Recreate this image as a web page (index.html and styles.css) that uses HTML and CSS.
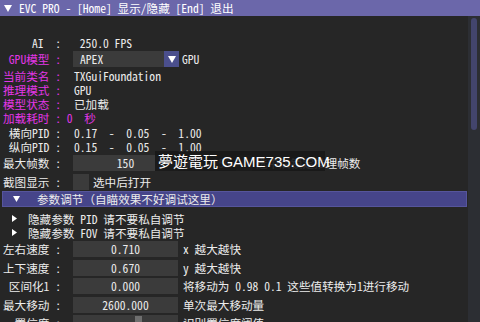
FILE: index.html
```html
<!DOCTYPE html>
<html lang="zh">
<head>
  <meta charset="UTF-8">
  <title>EVC PRO</title>
  <link rel="stylesheet" href="styles.css">
</head>
<body>
  <div class="window">
    <div class="titlebar">
      <svg class="tri-down" width="8" height="7" viewBox="0 0 8 7"><polygon points="0,0 8,0 4,7" fill="#fff"/></svg>
      <span>EVC PRO - [Home] 显示/隐藏 [End] 退出</span>
    </div>

    <div class="body">
      <div class="content">
        <div class="row"><span class="lbl">     AI  :</span><span class="val"> 250.0 FPS</span></div>

        <div class="wrow">
          <span class="lbl pink"> GPU模型 :</span>
          <div class="combo">
            <span class="combo-text">APEX</span>
            <span class="combo-btn"><svg width="8" height="7" viewBox="0 0 8 7"><polygon points="0,0 8,0 4,7" fill="#fff"/></svg></span>
          </div>
          <span class="after-combo">GPU</span>
        </div>

        <div class="row"><span class="lbl pink">当前类名 :</span><span class="val">TXGuiFoundation</span></div>
        <div class="row"><span class="lbl pink">推理模式 :</span><span class="val">GPU</span></div>
        <div class="row"><span class="lbl pink">模型状态 :</span><span class="val">已加载</span></div>
        <div class="row"><span class="pink">加载耗时 : 0  秒</span></div>
        <div class="row"><span class="lbl"> 横向PID :</span><span class="val">0.17  -  0.05  -  1.00</span></div>
        <div class="row"><span class="lbl"> 纵向PID :</span><span class="val">0.15  -  0.05  -  1.00</span></div>

        <div class="wrow">
          <span class="lbl">最大帧数 :</span>
          <div class="box">150</div>
          <span class="after">帧</span>
          <span class="dim">150</span>
          <span class="check check-lock"></span>
          <span class="check-label">选中后锁定推理帧数</span>
        </div>

        <div class="wrow">
          <span class="lbl">截图显示 :</span>
          <span class="check"></span>
          <span class="check-label">选中后打开</span>
        </div>

        <div class="header">
          <svg class="tri-small" width="7" height="6" viewBox="0 0 7 6"><polygon points="0,0 7,0 3.5,6" fill="#fff"/></svg>
          <span>参数调节（自瞄效果不好调试这里）</span>
        </div>

        <div class="row tree"><svg class="tri-right" width="5" height="7" viewBox="0 0 5 7"><polygon points="0,0 5,3.5 0,7" fill="#fff"/></svg><span>隐藏参数 PID 请不要私自调节</span></div>
        <div class="row tree"><svg class="tri-right" width="5" height="7" viewBox="0 0 5 7"><polygon points="0,0 5,3.5 0,7" fill="#fff"/></svg><span>隐藏参数 FOV 请不要私自调节</span></div>

        <div class="wrow">
          <span class="lbl">左右速度 :</span>
          <div class="box">0.710</div>
          <span class="after">x 越大越快</span>
        </div>
        <div class="wrow">
          <span class="lbl">上下速度 :</span>
          <div class="box">0.670</div>
          <span class="after">y 越大越快</span>
        </div>
        <div class="wrow">
          <span class="lbl"> 区间化1 :</span>
          <div class="box">0.000</div>
          <span class="after">将移动为 0.98 0.1 这些值转换为1进行移动</span>
        </div>
        <div class="wrow">
          <span class="lbl">最大移动 :</span>
          <div class="box">2600.000</div>
          <span class="after">单次最大移动量</span>
        </div>
        <div class="wrow">
          <span class="lbl">  置信度 :</span>
          <div class="box slider"><span class="grab"></span></div>
          <span class="after">识别置信度阈值</span>
        </div>
      </div>

      <div class="scrollbar"><div class="thumb"></div></div>
    </div>

    <div class="watermark">夢遊電玩 <span class="wm-latin">GAME735.COM</span></div>
  </div>
</body>
</html>
```

FILE: styles.css
```css
* { box-sizing: border-box; }
body { margin: 0; background: #262626; }

.window {
  position: relative;
  width: 480px;
  height: 322px;
  overflow: hidden;
  background: #262626;
  color: #ececec;
  font-family: "Noto Sans Mono CJK SC", "Noto Sans CJK SC", monospace;
  font-size: 11.6px;
}

.titlebar {
  height: 16px;
  background: #6b67aa;
  display: flex;
  align-items: center;
  padding-left: 4px;
  white-space: pre;
  color: #fff;
}
.tri-down { margin-right: 7px; }

.body { display: flex; height: 306px; }
.content { flex: 1; padding: 20px 0 0 3px; overflow: hidden; }

.row { height: 14.2px; display: flex; align-items: center; white-space: pre; }
.wrow { height: 18.5px; display: flex; align-items: center; white-space: pre; flex: none; }
.wrow:first-of-type { margin-bottom: 1.5px; }

.lbl { width: 70px; flex: none; }
.val { margin-left: 1px; }
.pink { color: #e336e6; }

.box {
  width: 105px;
  height: 16px;
  background: #3b3b3b;
  text-align: center;
  line-height: 16px;
  flex: none;
}
.after { margin-left: 5px; }
.dim { margin-left: 18px; color: #b8b8b8; }

.combo { width: 106px; height: 16px; display: flex; background: #3b3b3b; flex: none; }
.combo-text { flex: 1; padding-left: 7px; line-height: 16px; }
.combo-btn { width: 15px; background: #4b4f8d; display: flex; align-items: center; justify-content: center; }
.after-combo { margin-left: 3px; }

.check { width: 16px; height: 16px; background: #3b3b3b; flex: none; }
.check-lock { margin-left: 6px; }
.check-label { margin-left: 4px; }

.header {
  margin: 0 0 5px -1px;
  width: 465px;
  height: 16px;
  background: #46458a;
  border: 1px solid #56559c;
  display: flex;
  align-items: center;
  white-space: pre;
  flex: none;
}
.tri-small { margin-left: 10px; margin-right: 17px; }

.tree { height: 14px; }
.tri-right { margin-left: 9px; margin-right: 11px; }

.slider { position: relative; }
.grab { position: absolute; left: 62px; top: 1px; width: 7px; height: 14px; background: #6f6f6f; }

.scrollbar { width: 12px; background: #2c2e33; padding-top: 2px; }
.thumb { width: 6px; height: 112px; margin: 0 auto; border-radius: 3px; background: #43456d; }

.watermark {
  position: absolute;
  left: 155px;
  top: 151px;
  width: 170px;
  height: 20px;
  padding-left: 3px;
  background: rgba(24, 24, 24, 0.9);
  color: #fff;
  font-family: "Noto Sans CJK TC", "Noto Sans CJK SC", sans-serif;
  font-size: 15px;
  line-height: 20px;
  white-space: pre;
}
.wm-latin { font-family: "Liberation Sans", Arial, sans-serif; font-size: 15px; }
```
